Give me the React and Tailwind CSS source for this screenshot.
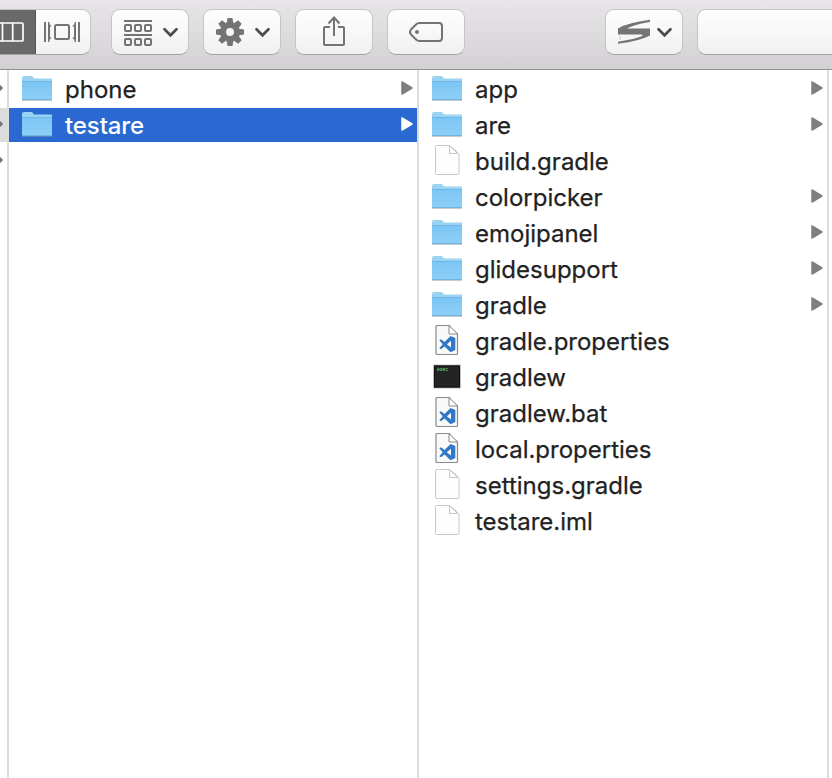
const FONT = 'font-["Inter","Liberation_Sans",sans-serif]';

function ToolButton({ box, className = "", children }) {
  return (
    <div className={`h-[46px] w-[78px] shrink-0 overflow-hidden rounded-[9px] border border-[#c5c3c6] border-b-[#a3a1a4] bg-linear-to-b from-[#fefefe] to-[#f1f1f1] ${className}`}>
      <svg className="-m-px block" width="78" height="46" viewBox={box}>{children}</svg>
    </div>
  );
}

function Chevron({ x }) {
  return <path d={`M${x + 1.5} 29.3l6 6 6-6`} fill="none" stroke="#4d4d4d" strokeWidth="2.7" strokeLinecap="round" />;
}

function Toolbar() {
  const cells = [124, 134, 144];
  return (
    <header className="flex h-[70px] shrink-0 items-start border-b border-[#939194] bg-linear-to-b from-[#e7e5e8] to-[#d3d1d4] pt-[9px]">
      <div className="flex h-[46px] w-[91px] shrink-0 overflow-hidden rounded-r-[9px] border border-l-0 border-[#c5c3c6] border-b-[#a3a1a4] bg-linear-to-b from-[#fefefe] to-[#f1f1f1]">
        <svg className="-my-px block shrink-0" width="91" height="46" viewBox="0 9 91 46">
          <rect x="0" y="9" width="36" height="46" fill="#696969" />
          <path d="M35.5 9v46" stroke="#585858" />
          <path d="M-5 23h27q1 0 1 1v16q0 1-1 1H-5M2.500 23v18M12.700 23v18" fill="none" stroke="#fff" strokeWidth="1.700" />
          <g fill="#737373">
            <path d="M44 22h2v20h-2zM78 22h2v20h-2z" />
            <path id="flap" d="M48 22h1.300l.5 2.500 1.700 1.500-1.500 1v10l1.500 1-1.700 1.500-.5 2.500H48z" />
            <use href="#flap" transform="translate(124 0) scale(-1 1)" />
          </g>
          <rect x="55" y="25" width="14" height="14" rx="1.5" fill="none" stroke="#737373" strokeWidth="2" />
        </svg>
      </div>
      <ToolButton box="111 9 78 46" className="ml-5">
        <path d="M124 21h28M124 35h28" stroke="#737373" strokeWidth="2" />
        {cells.map((x) => (
          <g key={x} fill="none" stroke="#737373" strokeWidth="2">
            <rect x={x + 1} y="25" width="6" height="6" rx="1" />
            <rect x={x + 1} y="39" width="6" height="6" rx="1" />
          </g>
        ))}
        <Chevron x={163} />
      </ToolButton>
      <ToolButton box="203 9 78 46" className="ml-3.5">
        <g transform="translate(230 32)">
          {[0, 45, 90, 135].map((a) => (
            <path key={a} d="M-2.5-14h5l.8 5h-6.6zM-2.5 14h5l.8-5h-6.6z" fill="#737373" transform={`rotate(${a})`} />
          ))}
          <circle r="7" fill="none" stroke="#737373" strokeWidth="6" />
        </g>
        <Chevron x={255} />
      </ToolButton>
      <ToolButton box="295 9 78 46" className="ml-3.5">
        <path d="M330 27h-5q-1 0-1 1v16q0 1 1 1h18q1 0 1-1V28q0-1-1-1h-5M334 36V18M328.5 23.5l5.5-6 5.5 6" fill="none" stroke="#737373" strokeWidth="2" />
      </ToolButton>
      <ToolButton box="387 9 78 46" className="ml-3.5">
        <path d="M419.5 23H439q3 0 3 3v12q0 3-3 3h-19.500q-2 0-3.500-1.500l-5-5q-2-2.500 0-5l5-5q1.500-1.500 3.500-1.500z" fill="none" stroke="#737373" strokeWidth="2" />
        <circle cx="417" cy="32" r="2" fill="#737373" />
      </ToolButton>
      <ToolButton box="605 9 78 46" className="ml-[140px]">
        <path d="M650 19.800v2.200Q635 24.300 627 28.500H650V35.500Q640 41 618 43.700V41.700Q636 39 641.500 36.300Q644.500 34.500 641 34.500H618V28.500Q627 22.800 650 19.800z" fill="#757575" />
        <path d="M619 36h2v4h-2z" fill="#dedede" />
        <Chevron x={657} />
      </ToolButton>
      <div className="ml-3.5 h-[46px] flex-1 rounded-l-[9px] border border-r-0 border-[#c5c3c6] border-b-[#a3a1a4] bg-linear-to-b from-[#fefefe] to-[#f1f1f1]" />
    </header>
  );
}

function Folder() {
  return (
    <svg width="32" height="32" viewBox="0 -2 32 32">
      <path d="M1 25.500h30" stroke="#8a9aa3" strokeOpacity=".5" />
      <path d="M1 3q0-2 2-2h7q1.200 0 2 1l1 1.500h17q1 0 1 1V8H1z" fill="#9bd3f3" />
      <path d="M1 6h30V24q0 1-1 1H2q-1 0-1-1z" fill="url(#folderFace)" />
      <path d="M1 6.500h30" stroke="#6db8e6" />
      <path d="M1 24.500h30" stroke="#6fb6e0" />
    </svg>
  );
}

function Page({ code }) {
  const edge = code ? "#8a8a8a" : "#c8c8c8";
  return (
    <svg width="32" height="32" viewBox="0 0 32 32">
      <path
        d={code ? "M6 .5H18.500Q20 4 26.500 9V28.500q0 1-1 1H6q-1 0-1-1V1.500q0-1 1-1z" : "M5.500 0.500H18q6 2.500 10 9V28.500q0 1-1 1H5.500q-1 0-1-1V1.500q0-1 1-1z"}
        fill={code ? "#f9f9f9" : "#fefefe"}
        stroke={edge}
        strokeWidth={code ? 1.2 : 1}
      />
      <path d={code ? "M18 .5v8.500h8.500z" : "M18.500.5v8h8z"} fill="#fff" stroke={edge} />
      {code && <path fill="#2f79c6" fillRule="evenodd" d="M19.500 11l4.800 2v12L19.500 27.200 13.500 21.500 10 24.200 8.300 23.200 11.700 19.200 8.300 15.200 10 14.200 13.500 17zM20 15.800l-4.200 3.400 4.200 3.400z" />}
    </svg>
  );
}

function Terminal() {
  return (
    <svg width="32" height="32" viewBox="0 0.500 32 32">
      <rect x="2.500" y="4.500" width="27" height="23" fill="#242424" stroke="#bcc3c3" />
      <rect x="3.500" y="5.500" width="25" height="21" fill="none" stroke="#111" />
      <text x="6" y="10.800" fill="#5fc45f" fontFamily="Liberation Mono" fontSize="4.600" fontWeight="700">exec</text>
    </svg>
  );
}

function Arrow({ light }) {
  return (
    <svg className="mb-0.5 shrink-0" width="13" height="16" viewBox="0 0 13 16">
      <path d="M1 2v12L11 8z" fill={light ? "#fff" : "#7f7f7f"} stroke={light ? "#fff" : "#7f7f7f"} strokeLinejoin="round" strokeWidth="1.500" />
    </svg>
  );
}

const icons = {
  folder: <Folder />,
  page: <Page />,
  code: <Page code />,
  exec: <Terminal />,
};

function Row({ name, kind, selected }) {
  return (
    <li className="h-9">
      <div className={`flex h-[34px] items-center pl-3 pr-[3px] ${selected ? "bg-[#2a68d2] text-white" : "text-[#222]"}`}>
        <span className="block h-8 w-8 shrink-0">{icons[kind]}</span>
        <span className={`ml-3 flex-1 whitespace-nowrap pt-0.5 text-[24px] leading-[34px] ${selected ? "font-medium tracking-[-0.1px]" : "[-webkit-text-stroke:0.25px_#222]"}`}>{name}</span>
        {kind === "folder" && <Arrow light={selected} />}
      </div>
    </li>
  );
}

const left = [
  { name: "phone", kind: "folder" },
  { name: "testare", kind: "folder", selected: true },
];

const right = [
  { name: "app", kind: "folder" },
  { name: "are", kind: "folder" },
  { name: "build.gradle", kind: "page" },
  { name: "colorpicker", kind: "folder" },
  { name: "emojipanel", kind: "folder" },
  { name: "glidesupport", kind: "folder" },
  { name: "gradle", kind: "folder" },
  { name: "gradle.properties", kind: "code" },
  { name: "gradlew", kind: "exec" },
  { name: "gradlew.bat", kind: "code" },
  { name: "local.properties", kind: "code" },
  { name: "settings.gradle", kind: "page" },
  { name: "testare.iml", kind: "page" },
];

export default function App() {
  return (
    <div className={`flex h-[778px] w-[832px] flex-col overflow-hidden bg-white ${FONT}`}>
      <svg className="absolute" width="0" height="0">
        <linearGradient id="folderFace" x1="0" y1="0" x2="0" y2="1">
          <stop offset="0" stopColor="#7cc6f3" />
          <stop offset="1" stopColor="#8ccff7" />
        </linearGradient>
      </svg>
      <Toolbar />
      <main className="flex min-h-0 flex-1">
        <div className="w-[9px] shrink-0 border-r-2 border-[#dcdcdc] pt-0.5">
          {[0, 1, 2].map((i) => (
            <div key={i} className="h-9">
              <div className={`flex h-[34px] items-center pb-0.5 ${i === 1 ? "bg-[#dcdcdc]" : ""}`}>
                <svg width="3" height="8" viewBox="0 0 3 8"><path d="M0 1.500h1L3 4 1 6.500H0z" fill="#737373" /></svg>
              </div>
            </div>
          ))}
        </div>
        <ul className="w-[410px] shrink-0 border-r-2 border-[#dcdcdc] pt-0.5">
          {left.map((r) => <Row key={r.name} {...r} />)}
        </ul>
        <ul className="w-[410px] shrink-0 border-r-2 border-[#dcdcdc] pt-0.5">
          {right.map((r) => <Row key={r.name} {...r} />)}
        </ul>
      </main>
    </div>
  );
}
